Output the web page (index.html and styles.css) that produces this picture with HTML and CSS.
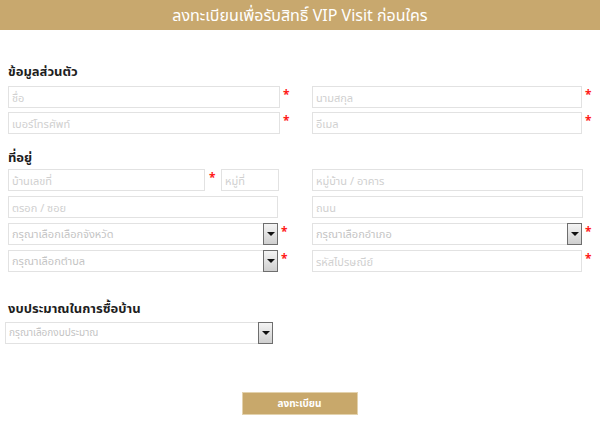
FILE: index.html
```html
<!DOCTYPE html>
<html lang="th">
<head>
<meta charset="utf-8">
<title>ลงทะเบียน</title>
<link rel="stylesheet" href="styles.css">
</head>
<body>
<div class="header">ลงทะเบียนเพื่อรับสิทธิ์ VIP Visit ก่อนใคร</div>
<form class="form">
  <h2 class="title t1">ข้อมูลส่วนตัว</h2>
  <div class="row">
    <div class="cell"><input class="field w-full" placeholder="ชื่อ"><span class="star">*</span></div>
    <div class="cell"><input class="field w-right" placeholder="นามสกุล"><span class="star">*</span></div>
  </div>
  <div class="row gap4">
    <div class="cell"><input class="field w-full" placeholder="เบอร์โทรศัพท์"><span class="star">*</span></div>
    <div class="cell"><input class="field w-right" placeholder="อีเมล"><span class="star">*</span></div>
  </div>

  <h2 class="title t2">ที่อยู่</h2>
  <div class="row">
    <div class="cell"><input class="field w-house" placeholder="บ้านเลขที่"><span class="star">*</span><input class="field w-moo" placeholder="หมู่ที่"></div>
    <div class="cell"><input class="field w-right" placeholder="หมู่บ้าน / อาคาร"></div>
  </div>
  <div class="row gap5">
    <div class="cell"><input class="field w-addr" placeholder="ตรอก / ซอย"></div>
    <div class="cell"><input class="field w-right" placeholder="ถนน"></div>
  </div>
  <div class="row gap5">
    <div class="cell"><div class="select w-addr"><span class="ph">กรุณาเลือกเลือกจังหวัด</span><span class="arrow"></span></div><span class="star">*</span></div>
    <div class="cell"><div class="select w-right"><span class="ph">กรุณาเลือกอำเภอ</span><span class="arrow"></span></div><span class="star">*</span></div>
  </div>
  <div class="row gap5">
    <div class="cell"><div class="select w-addr"><span class="ph">กรุณาเลือกตำบล</span><span class="arrow"></span></div><span class="star">*</span></div>
    <div class="cell"><input class="field w-right" placeholder="รหัสไปรษณีย์"><span class="star">*</span></div>
  </div>

  <h2 class="title t3">งบประมาณในการซื้อบ้าน</h2>
  <div class="select w-budget"><span class="ph small">กรุณาเลือกงบประมาณ</span><span class="arrow"></span></div>

  <div class="actions"><button type="button" class="submit">ลงทะเบียน</button></div>
</form>
</body>
</html>
```

FILE: styles.css
```css
* { box-sizing: border-box; }
body {
  margin: 0;
  background: #fff;
  font-family: "Noto Sans", "Noto Sans Thai", "DejaVu Sans", sans-serif;
  color: #222;
}
.header {
  height: 30px;
  background: #c8a86e;
  color: #fff;
  text-align: center;
  font-size: 16px;
  line-height: 30px;
}
.form {
  padding: 0 8px;
}
.title {
  margin: 0;
  font-size: 13px;
  font-weight: bold;
  line-height: 22px;
  height: 22px;
  color: #1e1e1e;
}
.t1 { margin-top: 30px; margin-bottom: 4px; }
.t2 { margin-top: 12px; margin-bottom: 1px; }
.t3 { margin-top: 25px; margin-bottom: 3px; }

.row {
  display: grid;
  grid-template-columns: 304px 280px;
  height: 22px;
}
.gap4 { margin-top: 4px; }
.gap5 { margin-top: 5px; }
.cell {
  display: flex;
  align-items: flex-start;
  height: 22px;
}
.field {
  height: 22px;
  border: 1px solid #e2e2e2;
  padding: 0 3px;
  font-family: inherit;
  font-size: 11px;
  color: #333;
  outline: none;
  margin: 0;
}
.field::placeholder { color: #d0d0d0; }
.w-full { width: 272px; }
.w-right { width: 271px; }
.w-house { width: 197px; }
.w-moo { width: 58px; margin-left: 5px; }
.w-addr { width: 270px; }
.w-budget { width: 268px; margin-left: -3px; }

.star {
  color: #ff1a1a;
  font-size: 12px;
  font-weight: bold;
  line-height: 18px;
  margin-left: 3px;
  width: 7px;
}
.cell .w-house + .star { margin-left: 4px; }

.select {
  position: relative;
  height: 22px;
  border: 1px solid #e2e2e2;
  display: flex;
  align-items: center;
  padding-left: 3px;
}
.ph {
  font-size: 11px;
  color: #c4c4c4;
  flex: 1;
  white-space: nowrap;
}
.ph.small { font-size: 10px; }
.arrow {
  width: 15px;
  height: 22px;
  margin: -1px -1px -1px 0;
  border: 1px solid #6e6e6e;
  background: linear-gradient(#f4f4f4, #cfcfcf);
  display: flex;
  align-items: center;
  justify-content: center;
}
.arrow::after {
  content: "";
  border-left: 4px solid transparent;
  border-right: 4px solid transparent;
  border-top: 4px solid #111;
}

.actions {
  display: flex;
  justify-content: center;
  margin-top: 48px;
  padding-right: 1px;
}
.submit {
  width: 116px;
  height: 23px;
  background: #c8a86b;
  border: 1px solid #e3d2ad;
  color: #fff;
  font-family: inherit;
  font-size: 10px;
  font-weight: bold;
  padding: 0;
}
```
